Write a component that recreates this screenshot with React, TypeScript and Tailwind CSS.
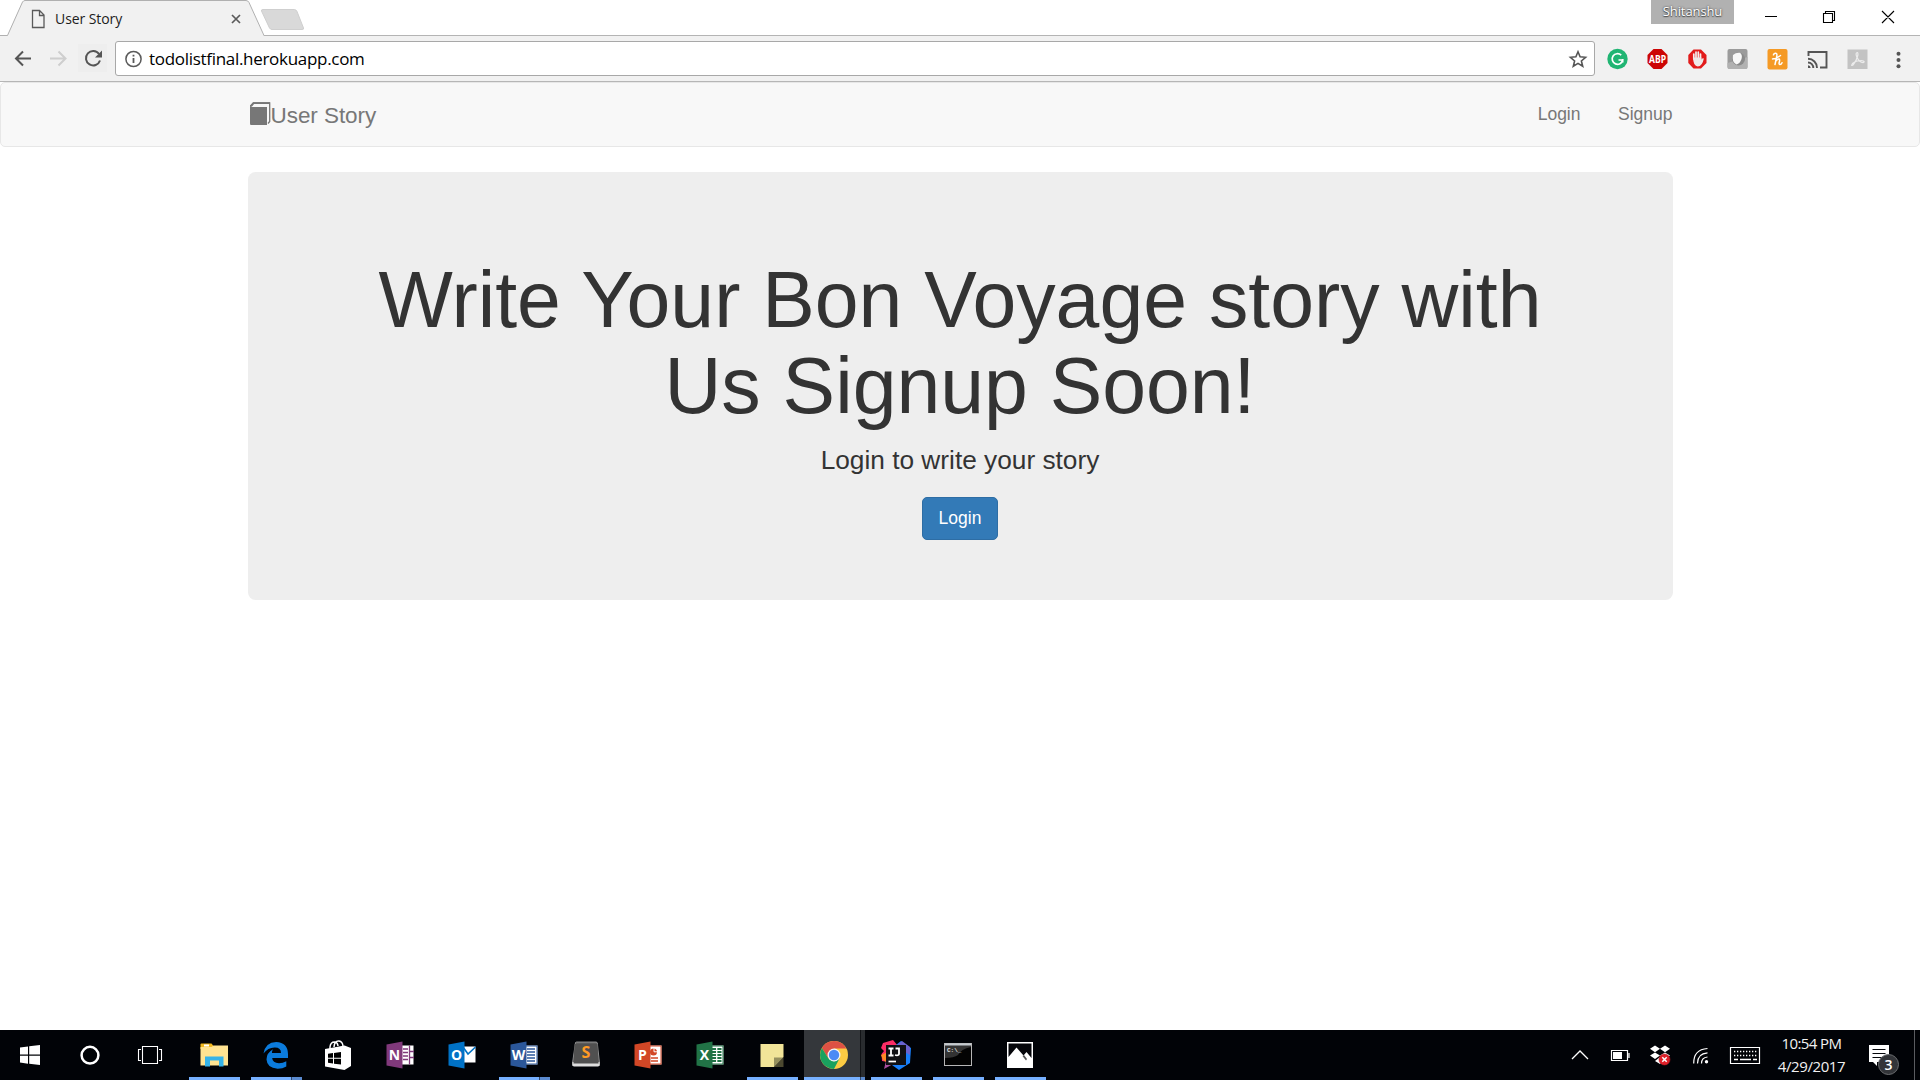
import type { ReactNode } from "react";

type IconProps = { w?: number; h?: number; children: ReactNode };

function Icon({ w = 28, h = 28, children }: IconProps) {
  return (
    <svg width={w} height={h} viewBox={`0 0 ${w} ${h}`} fill="none" className="block shrink-0 overflow-visible">
      {children}
    </svg>
  );
}

/* ---------- Browser chrome ---------- */

function TabStrip() {
  return (
    <div className="relative flex h-9 w-full items-start justify-between border-b border-[#b4b4b4] bg-white">
      <div className="relative h-9 w-[310px]">
        <svg width="310" height="36" viewBox="0 0 310 36" fill="none" className="absolute left-0 top-0">
          <path d="M7 36L22.500 2Q23.500 .5 25 .5H246Q248 .5 249 2.500L264 36Z" fill="#f1f1f1" />
          <path d="M0 35.500H7.500L22.500 2Q23.500 .5 25 .5H246Q248 .5 249 2.500L264 35.500" stroke="#b0b0b0" />
          <path d="M263 9.500H294.500Q296 9.500 297 11.500L303.500 28Q304 29.500 302 29.500H272Q270.500 29.500 269.500 28L261.500 11Q261 9.500 263 9.500Z" fill="#d9d9d9" stroke="#cfcfcf" />
          <path d="M32.500 10.500H39.500L44 15V27.500H32.500Z M39.500 10.500V15.500H44" stroke="#5a5a5a" strokeWidth="1.300" />
          <path d="M232 15L240 23M240 15L232 23" stroke="#5a5a5a" strokeWidth="1.700" />
        </svg>
        <span className="relative ml-[55px] mt-[9px] inline-block whitespace-nowrap font-['Open_Sans','Noto_Sans',sans-serif] text-[14px] leading-5 tracking-[-0.08px] text-[#1d1d1d]">
          User Story
        </span>
      </div>
      <div className="flex h-6 items-start">
        <div className="mr-[30px] h-6 w-[83px] bg-[#b1b1b1] text-center font-['Open_Sans','Noto_Sans',sans-serif] text-[13px] leading-[22px] tracking-[-0.1px] text-white [text-shadow:0_0_2px_#333,0_1px_1px_#555]">
          Shitanshu
        </div>
        <svg width="156" height="34" viewBox="0 0 156 34" fill="none" stroke="#000">
          <path d="M1 16.500H13M59.500 13.500H68.500V22.500H59.500ZM61.500 13V11.500H70.500V20.500H69M118 11L130 23M130 11L118 23" strokeWidth="1.100" />
        </svg>
      </div>
    </div>
  );
}

function Toolbar() {
  return (
    <div className="flex h-[46px] items-center border-b border-[#b6b6b6] bg-[#f1f1f1]">
      <svg width="115" height="45" viewBox="0 0 115 45" fill="none" className="shrink-0">
        <path d="M31 22.500H16M23 15.500L16 22.500L23 29.500" stroke="#555" strokeWidth="2" />
        <path d="M50 22.500H65M58.500 15.500L65.500 22.500L58.500 29.500" stroke="#cecece" strokeWidth="2" />
        <rect x="78" y="8" width="29" height="28" fill="#eeeeee" />
        <path d="M99 18A7.200 7.200 0 1 0 100 24.500" stroke="#555" strokeWidth="2" />
        <path d="M102 14.500V21.500H95Z" fill="#555" />
      </svg>
      <div className="flex h-[35px] w-[1480px] shrink-0 items-center rounded-[3px] border border-[#a8a8a8] bg-white pl-[8px] pr-[7px]">
        <Icon w={18} h={18}>
          <circle cx="9.500" cy="9" r="7.600" stroke="#5a5a5a" strokeWidth="1.500" />
          <path d="M9.500 8V13M9.500 4.800V6.600" stroke="#5a5a5a" strokeWidth="1.800" />
        </Icon>
        <span className="ml-[7px] whitespace-nowrap font-['Open_Sans','Noto_Sans',sans-serif] text-[17px] leading-6 tracking-[-0.3px] text-black">
          todolistfinal.herokuapp.com
        </span>
        <div className="ml-auto">
          <Icon w={18} h={18}>
            <path d="M9 1.800L11.100 6.800L16.600 7.300L12.400 11L13.700 16.300L9 13.400L4.300 16.300L5.600 11L1.400 7.300L6.900 6.800Z" stroke="#555" strokeWidth="1.600" />
          </Icon>
        </div>
      </div>
      <div className="ml-[12px] flex items-center gap-5">
        <Icon w={20} h={20}>
          <circle cx="10.500" cy="10" r="10.200" fill="#20b573" />
          <path d="M14.200 6.200A5.300 5.300 0 1 0 15.700 11H11.500M15.700 10V13.600" stroke="#fff" strokeWidth="1.700" />
        </Icon>
        <Icon w={20} h={20}>
          <path d="M6.500 0H14.500L20.500 6V14L14.500 20H6.500L.5 14V6Z" fill="#cc0505" />
          <text x="10.500" y="13.800" textAnchor="middle" textLength="17" lengthAdjust="spacingAndGlyphs" fill="#fff" fontSize="10.500" fontWeight="700" fontFamily="Open Sans, sans-serif">ABP</text>
        </Icon>
        <Icon w={20} h={20}>
          <path d="M6.500 .5H14L19.500 6V14L14 19.500H6.500L1.300 14V6Z" fill="#e21b1b" />
          <path d="M6.800 10V5M9 9V3M11.300 9V3.200M13.500 10V5" stroke="#f4eeee" strokeWidth="1.700" strokeLinecap="round" />
          <path d="M6 8.500H14.400V10.500L16 9L16.800 9.800Q15.300 17.300 10.800 17.500Q6.300 17.300 6 8.500Z" fill="#efe8e8" />
        </Icon>
        <Icon w={20} h={20}>
          <rect x=".5" y="0" width="20" height="20" rx="2" fill="#9b9b9b" />
          <path d="M.5 14L20.500 8V18Q20.500 20 18.500 20H2.500Q.5 20 .5 18Z" fill="#b1b1b1" />
          <circle cx="11.500" cy="10" r="6.500" fill="#8a8a8a" />
          <path d="M6 6Q9 3.200 13 3.800Q15.800 6 14.500 10Q13 14.500 9.500 15.500Q4.500 13 6 6Z" fill="#f8f8f8" />
        </Icon>
        <Icon w={20} h={20}>
          <rect x=".5" y="0" width="20" height="20.500" rx="2" fill="#f59a25" />
          <path d="M6.500 5.800Q7 4 8.800 4.200Q10.300 4.600 9.800 7L8 15.500M5.500 10Q10 9.500 13.500 6.500M8.800 12Q10.800 9.500 12.200 10Q13 10.500 12.300 13Q11.600 15.500 13 15.500Q14.300 15.400 15 13.700" stroke="#fff" strokeWidth="1.500" strokeLinecap="round" />
        </Icon>
        <Icon w={20} h={20}>
          <path d="M1.500 7V3H19.500V18.500H13M1 13.500A5.300 5.300 0 0 1 6.300 19M1 9.800A9 9 0 0 1 10 19" stroke="#555" strokeWidth="1.900" />
          <path d="M1 16.200A3 3 0 0 1 3.700 19H1Z" fill="#555" />
        </Icon>
        <Icon w={20} h={20}>
          <rect x=".5" y=".500" width="20" height="19.500" fill="#c3c3c3" />
          <path d="M10.200 3.500Q8.200 4 9.800 8Q12.500 13.500 16 13.600Q19 12.500 14.500 11.500Q9 11.500 5.500 14.500Q3.500 17.500 6 16Q9.500 12 10.800 6.500Q11.300 3.700 10.200 3.500Z" stroke="#ececec" strokeWidth="1.200" />
        </Icon>
        <Icon w={20} h={20}>
          <circle cx="11.500" cy="4.700" r="2" fill="#555" />
          <circle cx="11.500" cy="11" r="2" fill="#555" />
          <circle cx="11.500" cy="17.300" r="2" fill="#555" />
        </Icon>
      </div>
    </div>
  );
}

/* ---------- Web page ---------- */

function Page() {
  return (
    <main className="flex-1 bg-white font-['Liberation_Sans',Arial,sans-serif]">
      <nav className="mb-[25px] flex h-[65px] justify-center rounded-[5px] border border-[#e7e7e7] bg-[#f8f8f8] text-[#777]">
        <div className="flex w-[1425px] justify-between">
          <a className="flex pt-[18px] text-[22.500px] leading-[30px]">
            <Icon w={23} h={25}>
              <path d="M2.500 5.200L5.500 2H21.700V20.500L20 22.500" stroke="#777" strokeWidth="1.300" />
              <path d="M2 6H19V24H3Q2 24 2 22.500ZM2 6L2 4.500L5 1.300H22V3H6L4 5.500Z" fill="#777" />
            </Icon>
            <span className="tracking-[-0.06px]">User Story</span>
          </a>
          <div className="flex gap-[37.500px] pt-[19px] text-[17.500px] leading-[25px]">
            <a>Login</a>
            <a>Signup</a>
          </div>
        </div>
      </nav>
      <section className="mx-auto flex h-[428px] w-[1425px] flex-col items-center rounded-[7.500px] bg-[#eee] px-[75px] pt-[85px] text-center text-[#333]">
        <h1 className="text-[78.750px] leading-[86px]">
          Write Your Bon Voyage story with
          <br />
          Us Signup Soon!
        </h1>
        <p className="mt-[13px] text-[26.250px] leading-[37.500px]">Login to write your story</p>
        <button className="mt-[17px] h-[43px] w-[76px] rounded-[5px] border border-[#2e6da4] bg-[#337ab7] text-[17.500px] leading-[25px] text-white">
          Login
        </button>
      </section>
    </main>
  );
}

/* ---------- Taskbar icons ---------- */

function OfficeIcon({ letter, color, children }: { letter: string; color: string; children: ReactNode }) {
  return (
    <Icon>
      <rect x="14" y="4.500" width="13.500" height="19" fill="#fff" />
      {children}
      <path d="M.5 3.500L16.500 .5V27.500L.5 24.500Z" fill={color} />
      <text x="8.500" y="19" textAnchor="middle" fill="#fff" fontSize="14" fontWeight="700" fontFamily="Open Sans, sans-serif">{letter}</text>
    </Icon>
  );
}

const explorer = (
  <Icon>
    <path d="M.5 5V3Q.5 2.500 1.500 2.500H11.500L13.500 5V8H.5Z" fill="#f2b91f" />
    <path d="M4 3.500H9V5.500H4Z" fill="#fff" />
    <path d="M.5 24.500V6H11.500L13.500 4.500H28V24.500Z" fill="#ffe391" />
    <path d="M5 25.500V15.500H23.500V25.500H19V19.500H10V25.500Z" fill="#36b3e8" />
  </Icon>
);

const edge = (
  <Icon>
    <path d="M1.500 12.500Q3.500 1.200 14.200 1Q25.800 1.500 26 13V17H10.200Q10.500 22 17 22.300Q21 22.300 24.300 20.200V25.500Q20.500 27.800 15.500 27.700Q5 27 4.500 18.500Q4.500 12 11 8.300Q9.900 10 9.900 12H19Q19 6.500 13 6.500Q6 6.300 1.500 12.500Z" fill="#0b7bdc" />
  </Icon>
);

const store = (
  <Icon>
    <path d="M6 8V6Q6.500 1 10.500 1Q13.500 1 14 5M10 6Q10.500 -.5 15 0Q18.500 .5 19 5" stroke="#fff" strokeWidth="1.500" />
    <path d="M1 8L20.500 4.500L27 7V25L20.500 29L1 25.500Z" fill="#fff" />
    <path d="M4 12.800L9 12V16.800H4ZM10 11.900L17 11V16.800H10ZM4 17.800H9V22.500L4 21.800ZM10 17.800H17V23.500L10 22.700Z" fill="#000" />
  </Icon>
);

const sublime = (
  <Icon>
    <path d="M3.500 1.500Q4 1 5 1H24Q25 1 25.300 2L27.500 22V24.500H.5V22Z" fill="#5b5b5b" stroke="#aaa" strokeWidth=".8" />
    <path d="M.5 21H27.500V23.500Q27.500 25.500 26 25.500H2Q.5 25.500 .5 23.500Z" fill="#dedede" />
    <path d="M2.500 3H25.500L26.500 22.500H1.500Z" fill="#505050" />
    <text x="14" y="16.500" textAnchor="middle" fill="#ff9b24" fontSize="16" fontWeight="700" fontFamily="Open Sans, sans-serif">S</text>
  </Icon>
);

const sticky = (
  <Icon>
    <path d="M2.500 3H25.500V16L16 26H2.500Z" fill="#f1e498" />
    <path d="M16 16.500H25.500L16 26Z" fill="#96905e" />
    <path d="M25.500 16.500V26H16Z" fill="#4c4930" />
  </Icon>
);

const chromeIcon = (
  <Icon>
    <circle cx="14" cy="14" r="14" fill="#fccb43" />
    <path d="M14 7.500H26.400A14 14 0 0 0 1.900 7L8.300 17.300Z" fill="#dd5144" />
    <path d="M1.900 7L8.300 17.300L14 20.500L19.600 17.300L14 28A14 14 0 0 1 1.900 7Z" fill="#1aa15f" />
    <circle cx="14" cy="14" r="6.500" fill="#f4f4f4" />
    <circle cx="14" cy="14" r="5.200" fill="#4b8bf5" />
  </Icon>
);

const intellij = (
  <Icon w={30} h={30}>
    <path d="M2 3L12 0L17 6L12 23L1 21L.5 14L3 11L0 8Z" fill="#fc2d66" />
    <path d="M0 15L7 12V23L2 20Z" fill="#fb8a24" />
    <path d="M5 21L14 23L3 29Z" fill="#ab4fa0" />
    <path d="M15 5L20 1L30 8L29 23L18 30L11 25Z" fill="#187ffb" />
    <path d="M16 5L21 1L29 7V15L20 10Z" fill="#6a62ce" />
    <rect x="5" y="5" width="20" height="20" fill="#101014" />
    <path d="M7.500 8.500H12.500M10 8.500V15.500M7.500 15.500H12.500M14.500 8.500H18V14Q17.500 16 14 15" stroke="#fff" strokeWidth="1.800" />
    <path d="M7.500 21.500H15" stroke="#fff" strokeWidth="1.700" />
  </Icon>
);

const terminal = (
  <Icon>
    <rect x=".5" y="2.500" width="27" height="22" fill="#030303" stroke="#b6b6b6" />
    <path d="M1 3H27V6Q17 8 14 14Q10 17 1 17Z" fill="#333" />
    <path d="M1 3.500H27" stroke="#c5cbd0" strokeWidth="2" />
    <text x="3" y="11" fill="#e5e5e5" fontSize="6" fontWeight="700" fontFamily="Liberation Mono, monospace">C:\_</text>
  </Icon>
);

const photos = (
  <Icon>
    <rect x="1" y="1" width="26" height="26" fill="#fff" />
    <path d="M2.500 2.500H25.500V17L20.500 11L17.500 14.500L10.500 6.500L2.500 16Z" fill="#05060a" />
    <path d="M16.500 15L20 19.500L21 18L18 14Z" fill="#555" />
  </Icon>
);

type TaskItem = { name: string; icon: ReactNode; state?: "open" | "multi" | "active" };

const tasks: TaskItem[] = [
  { name: "File Explorer", icon: explorer, state: "open" },
  { name: "Edge", icon: edge, state: "multi" },
  { name: "Store", icon: store },
  {
    name: "OneNote",
    icon: (
      <OfficeIcon letter="N" color="#80397b">
        <path d="M17 8H22M17 11.500H22M17 15H22M17 18.500H22" stroke="#80397b" strokeWidth="1.500" />
        <path d="M23.500 4.500V23.500M24 10.500H28M24 16.500H28" stroke="#80397b" strokeWidth="1.300" />
      </OfficeIcon>
    ),
  },
  {
    name: "Outlook",
    icon: (
      <OfficeIcon letter="O" color="#0072c6">
        <path d="M14 4H28V5.500H14ZM14 21.500H28V24H14Z" fill="#000206" />
        <path d="M15 6L20 13L27.500 6" stroke="#0072c6" strokeWidth="1.600" />
      </OfficeIcon>
    ),
  },
  {
    name: "Word",
    icon: (
      <OfficeIcon letter="W" color="#2b579a">
        <path d="M17 8H25M17 11H25M17 14H25M17 17H25M17 20H25" stroke="#2b579a" strokeWidth="1.300" />
        <rect x="14.500" y="5" width="12.500" height="18" stroke="#2b579a" />
      </OfficeIcon>
    ),
    state: "multi",
  },
  { name: "Sublime Text", icon: sublime },
  {
    name: "PowerPoint",
    icon: (
      <OfficeIcon letter="P" color="#d24726">
        <rect x="14.500" y="5" width="12.500" height="18" stroke="#d24726" />
        <circle cx="19.500" cy="11" r="3.500" fill="#d24726" />
        <path d="M20 7V10.800H24" stroke="#fff" />
        <path d="M17 17H24M17 20H24" stroke="#d24726" strokeWidth="1.400" />
      </OfficeIcon>
    ),
  },
  {
    name: "Excel",
    icon: (
      <OfficeIcon letter="X" color="#217346">
        <rect x="14.500" y="5" width="12.500" height="18" stroke="#217346" />
        <path d="M16 8H25.500M16 11H25.500M16 14H25.500M16 17H25.500M16 20H25.500" stroke="#217346" strokeWidth="1.800" />
        <path d="M20.700 6V22" stroke="#fff" strokeWidth="1.300" />
      </OfficeIcon>
    ),
  },
  { name: "Sticky Notes", icon: sticky, state: "open" },
  { name: "Chrome", icon: chromeIcon, state: "active" },
  { name: "IntelliJ IDEA", icon: intellij, state: "open" },
  { name: "Command Prompt", icon: terminal, state: "open" },
  { name: "Photos", icon: photos, state: "open" },
];

function ActiveTaskButton({ icon }: TaskItem) {
  return (
    <div className="flex h-[50px] w-[62px] flex-col pl-px">
      <div className="flex h-[47px] w-[61px] bg-[#34373b]">
        <div className="flex h-[49px] w-[56px] shrink-0 items-center justify-center pl-[4px]">{icon}</div>
        <div className="h-[47px] w-[5px] shrink-0 border-l border-[#111316] bg-[#292c2f]" />
      </div>
      <div className="flex h-[3px]">
        <div className="w-14 bg-[#76b0ff]" />
        <div className="w-[5px] border-l border-[#33496b] bg-[#5b8bd0]" />
      </div>
    </div>
  );
}

function TaskButton({ icon, state }: TaskItem) {
  return (
    <div className="flex h-[50px] w-[62px] flex-col pl-[6px]">
      <div className="flex h-[47px] w-[51px]">
        <div className="flex h-[49px] w-[49px] shrink-0 items-center justify-center">{icon}</div>
      </div>
      {state && (
        <div className="flex h-[3px]">
          <div className={state === "open" ? "w-[51px] bg-[#76b0ff]" : "w-10 bg-[#76b0ff]"} />
          {state === "multi" && <div className="w-[11px] border-l border-[#33496b] bg-[#5b8bd0]" />}
        </div>
      )}
    </div>
  );
}

function Taskbar() {
  return (
    <footer className="flex h-[50px] w-full shrink-0 bg-[#010307]">
      <div className="flex w-[183px] items-center">
        <svg width="183" height="50" viewBox="0 0 183 50" fill="none">
          <path d="M20 17.500L28 16.400V24.500H20ZM29.200 16.200L40 15V24.500H29.200ZM20 25.700H28V33.700L20 32.500ZM29.200 25.700H40V35L29.200 33.800Z" fill="#fff" />
          <circle cx="90" cy="25.200" r="8.400" stroke="#fff" strokeWidth="2.500" />
          <path d="M142.500 16.500H157.500V33.500H142.500ZM141 19.500H138.500V30.500H141M159 19.500H161.500V30.500H159" stroke="#fff" strokeWidth="1.100" />
        </svg>
      </div>
      <div className="flex">
        {tasks.map((task) =>
          task.state === "active" ? (
            <ActiveTaskButton key={task.name} {...task} />
          ) : (
            <TaskButton key={task.name} {...task} />
          ),
        )}
      </div>
      <div className="ml-auto flex">
        <svg width="204" height="50" viewBox="1565 0 204 50" fill="none" stroke="#fff">
          <path d="M1572 29L1580 21L1588 29" strokeWidth="1.300" />
          <path d="M1611.500 20.500H1627.500V30.500H1611.500ZM1629 23V28" strokeWidth="1.200" />
          <path d="M1613 22H1622V29H1613Z" fill="#fff" stroke="none" />
          <path d="M1655 15.500L1660 18.800L1655 22.200L1650 18.800ZM1665 15.500L1670 18.800L1665 22.200L1660 18.800ZM1655 22.500L1660 25.500L1655 29L1650 25.500ZM1665 22.500L1670 25.500L1665 29L1660 25.500ZM1660 27L1664 30L1660 34L1655 31Z" fill="#fff" stroke="none" />
          <circle cx="1664.500" cy="29.500" r="5.500" fill="#df2029" stroke="#b31720" strokeWidth=".6" />
          <path d="M1662.300 27.300L1666.700 31.700M1666.700 27.300L1662.300 31.700" strokeWidth="1.500" />
          <path d="M1693.700 33.500Q1693.500 19.500 1707.500 18.500M1697.500 33.500Q1697.500 23.500 1707.500 22.800M1701.500 33.500Q1701.500 27.500 1707.500 27" strokeWidth="1.200" />
          <circle cx="1706.500" cy="31.700" r="1.700" fill="#fff" stroke="none" />
          <path d="M1730.500 17.500H1759.500V33.500H1730.500Z" strokeWidth="1.200" />
          <path d="M1734 21.500H1757M1734 25.500H1757" strokeWidth="1.300" strokeDasharray="1.300 1.700" />
          <path d="M1734 29.500H1738M1740 29.500H1751M1753 29.500H1757" strokeWidth="1.300" />
        </svg>
        <div className="flex w-[84px] flex-col items-center pl-px pt-[2px] font-['Open_Sans','Noto_Sans',sans-serif] text-[15px] leading-[23px] text-[#f1f1f1]">
          <span className="whitespace-nowrap tracking-[-0.6px]">10:54 PM</span>
          <span className="whitespace-nowrap tracking-[-0.4px]">4/29/2017</span>
        </div>
        <svg width="67" height="50" viewBox="1853 0 67 50" fill="none">
          <path d="M1869 15H1889V32H1877V36L1873 32H1869Z" fill="#fff" />
          <path d="M1872.500 19.500H1885.500M1872.500 23.500H1885.500M1872.500 27.500H1885.500" stroke="#05070b" strokeWidth="1.200" />
          <circle cx="1888.500" cy="34.500" r="10" fill="#333539" stroke="#6b6d70" />
          <text x="1888.500" y="39.500" textAnchor="middle" fill="#fff" fontSize="14" fontWeight="600" fontFamily="Open Sans, sans-serif">3</text>
          <path d="M1914.500 0V50" stroke="#5a5c60" />
        </svg>
      </div>
    </footer>
  );
}

export default function App() {
  return (
    <div className="flex h-[1080px] w-[1920px] flex-col overflow-hidden bg-white">
      <TabStrip />
      <Toolbar />
      <Page />
      <Taskbar />
    </div>
  );
}
